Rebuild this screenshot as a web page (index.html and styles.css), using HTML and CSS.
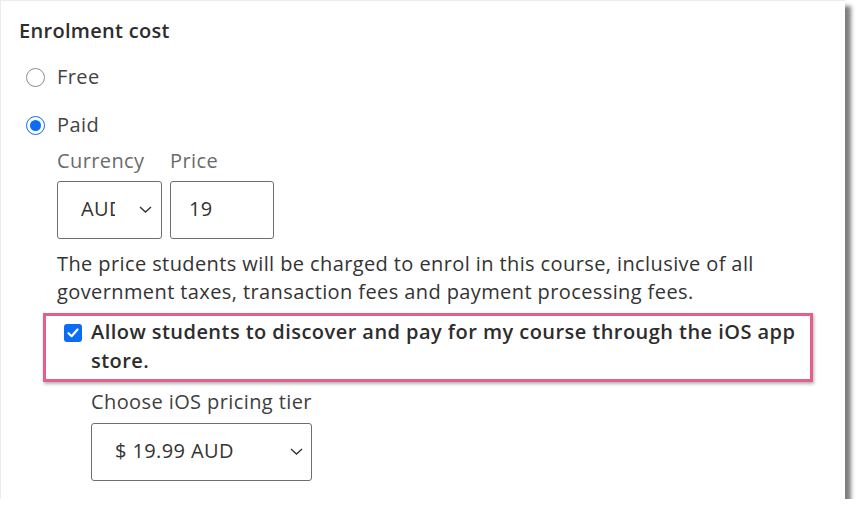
FILE: index.html
```html
<!DOCTYPE html>
<html lang="en">
<head>
    <meta charset="UTF-8">
    <meta name="viewport" content="width=device-width, initial-scale=1.0">
    <title>Enrolment cost</title>
    <link rel="stylesheet" href="styles.css">
</head>
<body>
    <div class="card">
        <h2 class="title">Enrolment cost</h2>
        <div class="option">
            <span class="radio"></span>
            <span>Free</span>
        </div>
        <div class="option">
            <span class="radio checked"></span>
            <span>Paid</span>
        </div>

        <div class="paid-fields">
            <div class="price-row">
                <div class="field">
                    <div class="field-label">Currency</div>
                    <div class="select select-currency">
                        <span class="select-value">AUD</span>
                        <svg class="chevron" width="13" height="7" viewBox="0 0 13 7"><polyline points="1,1 6.5,6 12,1" fill="none" stroke="#333" stroke-width="1.4"/></svg>
                    </div>
                </div>
                <div class="field">
                    <div class="field-label">Price</div>
                    <div class="text-input">19</div>
                </div>
            </div>

            <p class="help">The price students will be charged to enrol in this course, inclusive of all government taxes, transaction fees and payment processing fees.</p>

            <div class="ios-option">
                <span class="checkbox">
                    <svg width="14" height="14" viewBox="0 0 14 14"><polyline points="2.5,7.2 5.6,10.2 11.5,3.5" fill="none" stroke="#fff" stroke-width="2.2" stroke-linecap="round" stroke-linejoin="round"/></svg>
                </span>
                <span class="ios-label">Allow students to discover and pay for my course through the iOS app store.</span>
            </div>

            <div class="ios-tier">
                <div class="field-label dark">Choose iOS pricing tier</div>
                <div class="select select-tier">
                    <span class="select-value">$ 19.99 AUD</span>
                    <svg class="chevron" width="13" height="7" viewBox="0 0 13 7"><polyline points="1,1 6.5,6 12,1" fill="none" stroke="#333" stroke-width="1.4"/></svg>
                </div>
            </div>
        </div>
    </div>
</body>
</html>
```

FILE: styles.css
```css
body {
    margin: 0;
    background-color: #fff;
    font-family: "Open Sans", "Liberation Sans", sans-serif;
    font-size: 20px;
    line-height: 28.8px;
    letter-spacing: 0.4px;
    color: #333;
}
.card {
    box-sizing: border-box;
    width: 845px;
    padding: 16px 18px 18px 18px;
    background-color: #fff;
    border-top: 1px solid #ececec;
    border-left: 1px solid #ececec;
    box-shadow: 6px 6px 4px rgba(0, 0, 0, 0.5);
}
.title {
    margin: 0 0 8px 0;
    font-size: 20px;
    line-height: 28.8px;
    font-weight: 600;
    letter-spacing: 0.3px;
    color: #2d2d2d;
}
.option {
    display: flex;
    align-items: center;
    gap: 12px;
    height: 48px;
    padding-left: 7px;
    color: #444;
}
.radio {
    box-sizing: border-box;
    width: 19px;
    height: 19px;
    border: 1px solid #8c8c8c;
    border-radius: 50%;
    background-color: #fff;
}
.radio.checked {
    border-color: #0b6cf5;
    position: relative;
}
.radio.checked::after {
    content: "";
    position: absolute;
    left: 3px;
    top: 3px;
    width: 11px;
    height: 11px;
    border-radius: 50%;
    background-color: #0b6cf5;
}
.paid-fields {
    padding-left: 38px;
    margin-top: -3px;
}
.price-row {
    display: flex;
    gap: 8px;
}
.field-label {
    color: #6b6b6b;
    margin-bottom: 5px;
}
.field-label.dark {
    color: #404040;
    margin-bottom: 6px;
}
.select, .text-input {
    box-sizing: border-box;
    height: 58px;
    border: 1px solid #6e6e6e;
    border-radius: 3px;
    background-color: #fff;
    display: flex;
    align-items: center;
}
.select {
    padding: 0 9px 0 23px;
}
.select-value {
    flex: 1;
    white-space: nowrap;
    overflow: hidden;
}
.select-currency {
    width: 105px;
}
.select-currency .select-value {
    flex: none;
    width: 34px;
    margin-right: 24px;
}
.text-input {
    width: 104px;
    padding-left: 18px;
}
.help {
    margin: 11px 0 6px 0;
    width: 740px;
    color: #333;
}
.ios-option {
    display: flex;
    align-items: flex-start;
    width: 770px;
    box-sizing: border-box;
    margin-left: -14px;
    padding: 2px 10px 3px 18px;
    border: 3px solid #e2608b;
    box-shadow: 1px 2px 3px rgba(0, 0, 0, 0.3);
}
.checkbox {
    flex: none;
    display: flex;
    align-items: center;
    justify-content: center;
    width: 18px;
    height: 18px;
    margin-top: 6px;
    margin-right: 9px;
    border-radius: 3px;
    background-color: #0b6cf5;
}
.ios-label {
    font-weight: 600;
    letter-spacing: 0.45px;
    color: #2d2d2d;
}
.ios-tier {
    padding-left: 34px;
    margin-top: 6px;
}
.select-tier {
    width: 221px;
    padding-right: 8px;
}
```
